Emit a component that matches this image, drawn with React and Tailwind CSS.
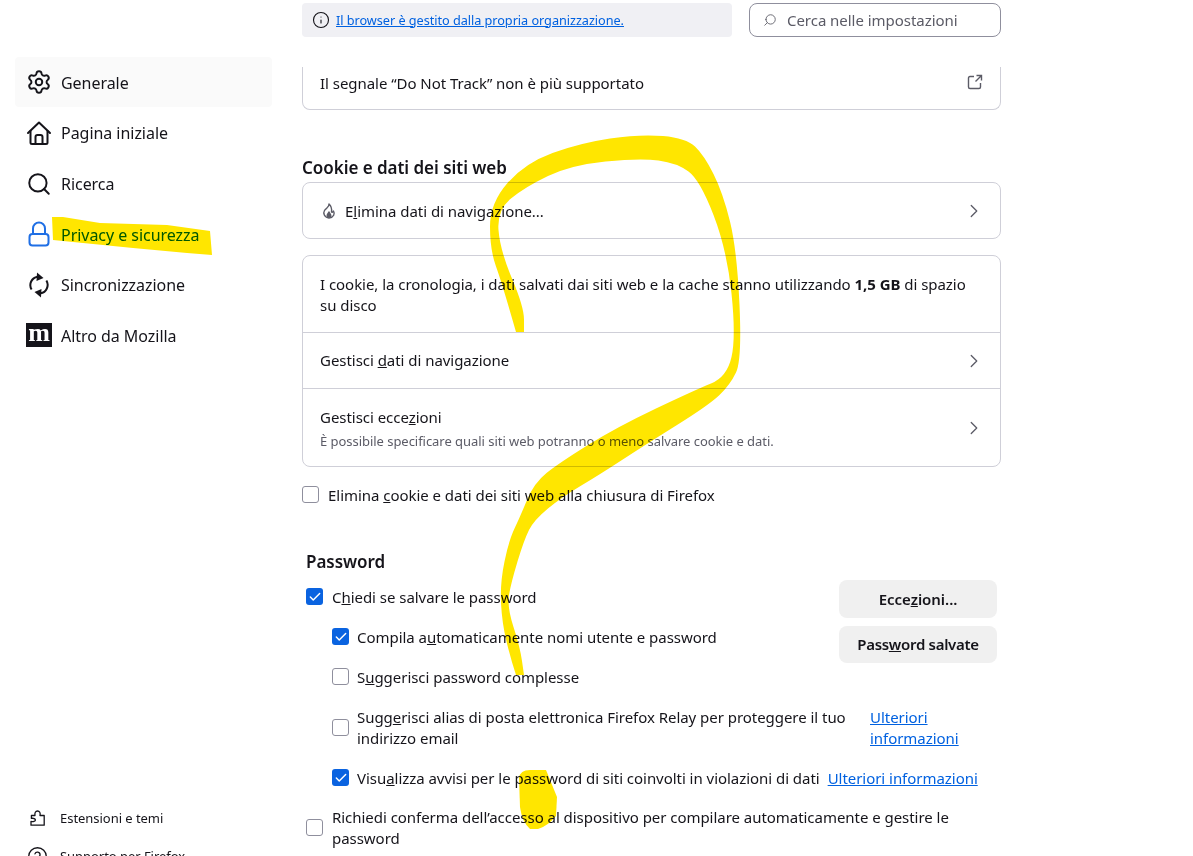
import React from 'react';
import { Settings, Search, Check, ChevronRight, Info, CircleHelp } from 'lucide-react';

// midpoint smoothing for the marker strokes
function smooth(points) {
  let d = '';
  for (let i = 1; i < points.length - 1; i++) {
    const [x, y] = points[i];
    const [nx, ny] = points[i + 1];
    d += `Q${x} ${y} ${(x + nx) / 2} ${(y + ny) / 2} `;
  }
  const last = points[points.length - 1];
  return d + `L${last[0]} ${last[1]} `;
}

function stroke(a, b) {
  const back = [...b].reverse();
  return `M${a[0][0]} ${a[0][1]} ` + smooth(a) + `L${back[0][0]} ${back[0][1]} ` + smooth(back) + 'Z';
}

const bigOuter = [[516,332],[502,283],[490,250],[490,203],[525,163],[580,143],[640,134],[686,138],[704,155],[723,193],[737,250],[742,360],[730,385],[709,405],[645,445],[599,475],[562,497],[534,520],[524,540],[511,583],[507,607],[520,647],[524,675]];
const bigInner = [[524,332],[524,307],[500,250],[497,210],[525,187],[571,165],[640,158],[677,163],[700,180],[727,250],[736,337],[727,377],[695,390],[617,427],[559,463],[534,483],[520,517],[509,540],[500,583],[502,623],[511,660],[516,675]];

function Marker() {
  return (
    <svg className="absolute inset-0 w-full h-full pointer-events-none mix-blend-multiply" viewBox="0 0 1193 856">
      <path fill="#ffe600" d={stroke(bigOuter, bigInner)} />
      <path fill="#ffe600" d="M519 778Q520 770 530 770L546 770L557 797L556 816Q548 826 538 829L530 829Q522 822 520 807Z" />
      <path fill="#ffe600" d="M52 217L63 217L100 223L167 225L210 231L212 255L187 253L133 248L83 243L53 240Z" />
    </svg>
  );
}

function Checkbox({ checked }) {
  if (checked) {
    return (
      <span className="w-[17px] h-[17px] mb-[2px] shrink-0 rounded-[3px] bg-[#0a63e0] flex items-center justify-center">
        <Check className="w-3.5 h-3.5 text-white" strokeWidth={2.5} />
      </span>
    );
  }
  return <span className="w-[17px] h-[17px] mb-[2px] shrink-0 rounded-[3px] border border-[#8f8f9d] bg-white"></span>;
}

function NavItem({ icon, label, active, color }) {
  return (
    <div className={`h-[50px] mb-[0.6px] pl-[11px] flex items-center gap-[9px] rounded ${active ? 'bg-[#fafafa]' : ''}`}>
      <span className="w-[26px] flex items-center justify-center">{icon}</span>
      <span className={`text-[16px] pt-[2px] ${color || 'text-[#15141a]'}`}>{label}</span>
    </div>
  );
}

function HomeIcon() {
  return (
    <svg width="26" height="26" viewBox="0 0 26 26" fill="none" stroke="#15141a" strokeWidth="2" strokeLinejoin="round" strokeLinecap="round">
      <path d="M2 13L13 2.5L24 13" />
      <path d="M4.5 11V22.5Q4.5 24 6 24H20Q21.5 24 21.5 22.5V11" />
      <path d="M9.5 24V17Q9.5 15 11.5 15H14.5Q16.5 15 16.5 17V24" />
    </svg>
  );
}

function LockIcon() {
  return (
    <svg width="22" height="26" viewBox="0 0 22 26" fill="none" stroke="#1f6fe5" strokeWidth="2">
      <path d="M5 13V7.5a6 6 0 0 1 12 0V13" />
      <rect x="1.5" y="13" width="19" height="11.5" rx="3" />
    </svg>
  );
}

function SyncIcon() {
  return (
    <svg width="20" height="26" viewBox="0 0 20 26" fill="none" stroke="#15141a" strokeWidth="2">
      <path d="M2.6 17.5A8.5 8.5 0 0 1 8.5 4.7" />
      <path d="M17.4 8.5A8.5 8.5 0 0 1 11.5 21.3" />
      <path d="M8 0.5L14.5 6L7.5 9Z" fill="#15141a" stroke="none" />
      <path d="M12 25.5L5.5 20L12.5 17Z" fill="#15141a" stroke="none" />
    </svg>
  );
}

function PuzzleIcon() {
  return (
    <svg width="15" height="16" viewBox="0 0 15 16" fill="none" stroke="#15141a" strokeWidth="1.3" strokeLinejoin="round">
      <path d="M1 15.2H14.2V5.5H10C10.6 3 9.6 1 7.5 1C5.5 1 4.5 3 5 5.5H1.4V8.4C3.6 7.9 5.4 8.8 5.4 10C5.4 11.4 3 12 1 11.4Z" />
    </svg>
  );
}

function FlameIcon() {
  return (
    <svg width="14" height="16" viewBox="0 0 14 16" fill="none" stroke="#5b5b66" strokeWidth="1.4" strokeLinejoin="round">
      <path d="M7 1C7.5 4 4 5 2.5 7.5C1 10 2 14.5 7 15C12 14.5 13 10.5 11.5 8C11 9 10 9.5 9.5 9C10 6 9 3 7 1Z" />
      <path d="M7 9C6.5 10.5 5 11 5.2 12.8C5.5 14.5 8.5 14.5 8.8 12.8C9 11.5 7.5 10.5 7 9Z" fill="#5b5b66" />
    </svg>
  );
}

function ExternalIcon() {
  return (
    <svg className="mb-[3px]" width="16" height="16" viewBox="0 0 16 16" fill="none" stroke="#5b5b66" strokeWidth="1.4">
      <path d="M7 2.5H3Q1.5 2.5 1.5 4V13Q1.5 14.5 3 14.5H12Q13.5 14.5 13.5 13V9" />
      <path d="M9.5 1.5H14.5V6.5M14.5 1.5L8.5 7.5" />
    </svg>
  );
}

function Chevron() {
  return <ChevronRight className="w-[22px] h-[22px] text-[#5b5b66]" strokeWidth={1.4} />;
}

function Link({ children }) {
  return <span className="text-[#0061e0] underline">{children}</span>;
}

export default function App() {
  return (
    <div className="relative h-[856px] overflow-hidden bg-white text-[#15141a] flex font-['Noto_Sans','Open_Sans',sans-serif] text-[15px] leading-[21px] tracking-[-0.04px]">
      <aside className="w-[302px] shrink-0 pl-[15px] pr-[30px] pt-[57.4px] flex flex-col">
        <NavItem active label="Generale" icon={<Settings className="w-[26px] h-[26px]" strokeWidth={1.8} />} />
        <NavItem label="Pagina iniziale" icon={<HomeIcon />} />
        <NavItem label="Ricerca" icon={<Search className="w-[26px] h-[26px]" strokeWidth={1.8} />} />
        <NavItem label="Privacy e sicurezza" color="text-[#0061e0]" icon={<LockIcon />} />
        <NavItem label="Sincronizzazione" icon={<SyncIcon />} />
        <NavItem
          label="Altro da Mozilla"
          icon={
            <span className="w-[26px] h-6 bg-[#15141a] text-white flex items-center justify-center font-['Liberation_Serif',serif] font-bold text-[26px] leading-[24px] pb-[5px]">m</span>
          }
        />
        <div className="mt-auto">
          <div className="h-[38px] pl-[15px] flex items-center gap-[15px] text-[13px]">
            <PuzzleIcon />
            <span>Estensioni e temi</span>
          </div>
          <div className="h-[38px] -mb-[19px] pl-[12px] flex items-center gap-[12px] text-[13px]">
            <CircleHelp className="w-[21px] h-[21px]" strokeWidth={1.5} />
            <span>Supporto per Firefox</span>
          </div>
        </div>
      </aside>

      <main className="w-[699px] shrink-0">
        <div className="h-[67px] pt-[3px] flex gap-[17px] items-start">
          <div className="w-[430px] h-[34px] rounded bg-[#f0f0f4] pl-[10px] pr-[11px] flex items-center gap-[6px] text-[12.7px]">
            <Info className="w-[18px] h-[18px]" strokeWidth={1.5} />
            <Link>Il browser è gestito dalla propria organizzazione.</Link>
          </div>
          <div className="flex-1 h-[34px] rounded-lg border border-[#8f8f9d] px-[13px] flex items-center gap-[10px] text-[#5b5b66]">
            <Search className="w-[14px] h-[14px] -scale-x-100" strokeWidth={1.5} />
            <span>Cerca nelle impostazioni</span>
          </div>
        </div>

        <div className="h-[43px] border border-t-0 border-[#cfcfd8] rounded-b-lg px-[17px] pb-[9px] flex items-center justify-between">
          <span>Il segnale “Do Not Track” non è più supportato</span>
          <ExternalIcon />
        </div>

        <h2 className="mt-[46px] mb-[3px] text-[17px] leading-[23px] font-semibold">Cookie e dati dei siti web</h2>

        <div className="h-[57px] border border-[#cfcfd8] rounded-lg pl-[19px] pr-[15px] flex items-center justify-between">
          <span className="flex items-center gap-[9px]">
            <FlameIcon />
            <span className="pt-[1px]">E<u>l</u>imina dati di navigazione...</span>
          </span>
          <Chevron />
        </div>

        <div className="mt-[16px] border border-[#cfcfd8] rounded-lg">
          <div className="h-[77px] px-[17px] pt-[1px] flex items-center border-b border-[#cfcfd8]">
            <p>I cookie, la cronologia, i dati salvati dai siti web e la cache stanno utilizzando <b>1,5 GB</b> di spazio su disco</p>
          </div>
          <div className="h-[56px] pl-[17px] pr-[15px] flex items-center justify-between border-b border-[#cfcfd8]">
            <span>Gestisci <u>d</u>ati di navigazione</span>
            <Chevron />
          </div>
          <div className="h-[77px] pl-[17px] pr-[15px] flex items-center justify-between">
            <div className="pt-[2px]">
              <div>Gestisci ecce<u>z</u>ioni</div>
              <div className="text-[13px] leading-[19px] mt-[4px] text-[#5b5b66]">È possibile specificare quali siti web potranno o meno salvare cookie e dati.</div>
            </div>
            <Chevron />
          </div>
        </div>

        <div className="mt-[18px] flex items-center gap-[9px]">
          <Checkbox />
          <span>Elimina <u>c</u>ookie e dati dei siti web alla chiusura di Firefox</span>
        </div>

        <section className="pl-[4px] pr-[4px] mt-[44px]">
          <h3 className="text-[17px] leading-[23px] font-semibold">Password</h3>
          <div className="mt-[7px] flex justify-between">
            <div className="pt-[7px]">
              <div className="flex items-center gap-[9px]">
                <Checkbox checked />
                <span>C<u>h</u>iedi se salvare le password</span>
              </div>
              <div className="mt-[19px] pl-[26px] flex items-center gap-[8px]">
                <Checkbox checked />
                <span>Compila a<u>u</u>tomaticamente nomi utente e password</span>
              </div>
            </div>
            <div className="w-[158px] flex flex-col gap-[8px] font-semibold">
              <div className="h-[38px] rounded-lg bg-[#f0f0f0] flex items-center justify-center">Ecce<u>z</u>ioni...</div>
              <div className="h-[37px] rounded-lg bg-[#f0f0f0] flex items-center justify-center tracking-[-0.3px]">Pass<u>w</u>ord salvate</div>
            </div>
          </div>

          <div className="mt-[4px] pl-[26px] flex items-center gap-[8px]">
            <Checkbox />
            <span>S<u>u</u>ggerisci password complesse</span>
          </div>

          <div className="mt-[19px] pl-[26px] flex items-center gap-[8px]">
            <Checkbox />
            <span className="w-[496px]">Sugg<u>e</u>risci alias di posta elettronica Firefox Relay per proteggere il tuo indirizzo email</span>
            <span className="ml-[9px] w-[110px]"><Link>Ulteriori informazioni</Link></span>
          </div>

          <div className="mt-[19px] pl-[26px] flex items-center gap-[8px]">
            <Checkbox checked />
            <span>Visu<u>a</u>lizza avvisi per le password di siti coinvolti in violazioni di dati</span>
            <Link>Ulteriori informazioni</Link>
          </div>

          <div className="mt-[18px] flex items-center gap-[9px]">
            <Checkbox />
            <span className="w-[640px]">Richiedi conferma dell’accesso al dispositivo per compilare automaticamente e gestire le password</span>
          </div>
        </section>
      </main>

      <Marker />
    </div>
  );
}
